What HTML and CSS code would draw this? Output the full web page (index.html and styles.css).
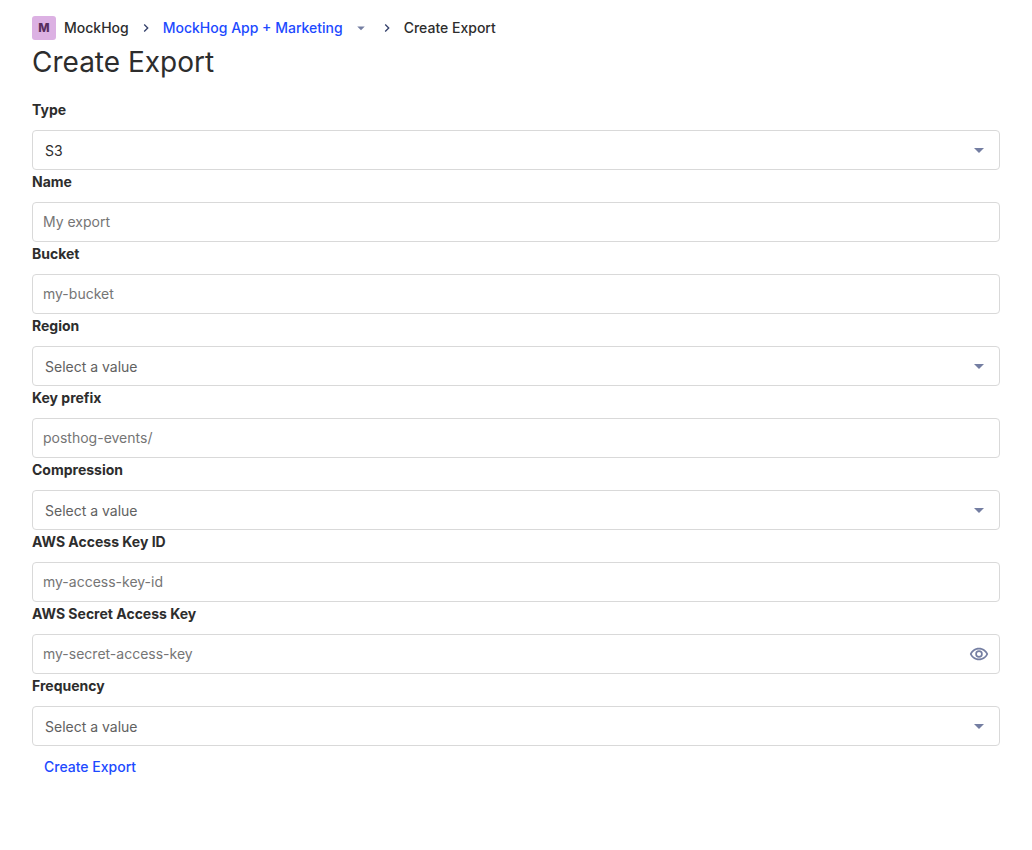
FILE: index.html
```html
<!DOCTYPE html>
<html lang="en">
<head>
<meta charset="utf-8">
<meta name="viewport" content="width=device-width, initial-scale=1">
<title>Create Export</title>
<link rel="stylesheet" href="styles.css">
</head>
<body>
<main class="scene">
  <nav class="breadcrumbs" aria-label="Breadcrumb">
    <span class="lettermark">M</span>
    <span class="crumb">MockHog</span>
    <svg class="separator" viewBox="0 0 24 24" aria-hidden="true"><path d="M8.6 16.6 13.2 12 8.6 7.4 10 6l6 6-6 6z"/></svg>
    <a class="crumb crumb-link" href="#">MockHog App + Marketing <svg class="caret" viewBox="0 0 24 24" aria-hidden="true"><path d="m7 10 5 5 5-5z"/></svg></a>
    <svg class="separator" viewBox="0 0 24 24" aria-hidden="true"><path d="M8.6 16.6 13.2 12 8.6 7.4 10 6l6 6-6 6z"/></svg>
    <span class="crumb">Create Export</span>
  </nav>
  <h1 class="title">Create Export</h1>
  <form class="form">
    <label class="label" for="type">Type</label>
    <div class="control">
      <select class="field select" id="type"><option>S3</option></select>
      <svg class="control-icon" viewBox="0 0 24 24" aria-hidden="true"><path d="m7 10 5 5 5-5z"/></svg>
    </div>
    <label class="label" for="name">Name</label>
    <input class="field" id="name" type="text" placeholder="My export">
    <label class="label" for="bucket">Bucket</label>
    <input class="field" id="bucket" type="text" placeholder="my-bucket">
    <label class="label" for="region">Region</label>
    <div class="control">
      <select class="field select unset" id="region"><option>Select a value</option></select>
      <svg class="control-icon" viewBox="0 0 24 24" aria-hidden="true"><path d="m7 10 5 5 5-5z"/></svg>
    </div>
    <label class="label" for="prefix">Key prefix</label>
    <input class="field" id="prefix" type="text" placeholder="posthog-events/">
    <label class="label" for="compression">Compression</label>
    <div class="control">
      <select class="field select unset" id="compression"><option>Select a value</option></select>
      <svg class="control-icon" viewBox="0 0 24 24" aria-hidden="true"><path d="m7 10 5 5 5-5z"/></svg>
    </div>
    <label class="label" for="key-id">AWS Access Key ID</label>
    <input class="field" id="key-id" type="text" placeholder="my-access-key-id">
    <label class="label" for="secret">AWS Secret Access Key</label>
    <div class="control">
      <input class="field" id="secret" type="password" placeholder="my-secret-access-key">
      <button class="reveal" type="button" aria-label="Show secret"><svg viewBox="0 0 24 24" aria-hidden="true"><path d="M12 6.5c3.8 0 7.2 2.1 8.8 5.5-1.6 3.4-5 5.5-8.8 5.5S4.8 15.4 3.2 12C4.8 8.6 8.2 6.5 12 6.5m0-2C7 4.5 2.7 7.6 1 12c1.7 4.4 6 7.5 11 7.5s9.3-3.1 11-7.5c-1.7-4.4-6-7.5-11-7.5zm0 5a2.5 2.5 0 0 1 0 5 2.5 2.5 0 0 1 0-5m0-2a4.5 4.5 0 1 0 0 9 4.5 4.5 0 0 0 0-9z"/></svg></button>
    </div>
    <label class="label" for="frequency">Frequency</label>
    <div class="control">
      <select class="field select unset" id="frequency"><option>Select a value</option></select>
      <svg class="control-icon" viewBox="0 0 24 24" aria-hidden="true"><path d="m7 10 5 5 5-5z"/></svg>
    </div>
    <button class="submit" type="submit">Create Export</button>
  </form>
</main>
</body>
</html>
```
FILE: styles.css
```css
* { box-sizing: border-box; }
body {
  margin: 0;
  background: #fff;
  color: #2d2d2d;
  font: 14px/20px Inter, sans-serif;
}
svg { fill: currentColor; }
.scene { padding: 16px 32px; }
.breadcrumbs {
  display: flex;
  align-items: center;
  height: 24px;
  font-weight: 500;
}
.lettermark {
  display: flex;
  align-items: center;
  justify-content: center;
  width: 24px;
  height: 24px;
  margin-right: 8px;
  border-radius: 3px;
  background: #dcb1e3;
  color: #572e5e;
  font-size: 12px;
  font-weight: 800;
}
.separator { width: 16px; height: 16px; margin: 0 9px; color: #35416b; }
.crumb { display: flex; align-items: center; }
.crumb-link { color: #1d4aff; text-decoration: none; }
.caret { width: 18px; height: 18px; margin-left: 9px; color: #747ea2; }
.title {
  margin: 4px 0 20px;
  font-size: 28px;
  font-weight: 400;
  line-height: 36px;
}
.form { display: flex; flex-direction: column; }
.label { padding-bottom: 10px; font-weight: 700; }
.control { position: relative; }
.label + .control, .label + .field { margin-bottom: 2px; }
.field {
  display: block;
  width: 100%;
  height: 40px;
  padding: 0 10px 1px;
  border: 1px solid #d9d9d9;
  border-radius: 4px;
  background: #fff;
  color: #2d2d2d;
  font: inherit;
}
.field::placeholder { color: #757575; opacity: 1; }
.select { appearance: none; padding: 2px 12px 0; }
.unset { color: #616161; }
.control-icon {
  position: absolute;
  top: 8px;
  right: 9px;
  width: 24px;
  height: 24px;
  color: #747ea2;
  pointer-events: none;
}
.reveal {
  position: absolute;
  top: 10px;
  right: 11px;
  width: 20px;
  height: 20px;
  padding: 0;
  border: 0;
  background: none;
  color: #747ea2;
}
.reveal svg { display: block; width: 20px; height: 20px; }
.submit {
  align-self: flex-start;
  height: 38px;
  padding: 0 12px;
  border: 0;
  background: none;
  color: #1d4aff;
  font: inherit;
  font-weight: 500;
}
```
